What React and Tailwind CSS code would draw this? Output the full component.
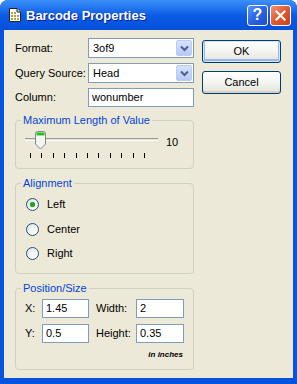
import React from "react";

const F = { fontFamily: '"Liberation Sans", Arial, sans-serif' };

function Combo({ value }) {
  return (
    <div className="h-[20px] w-[106px] border border-[#7F9DB9] bg-white flex items-center justify-between pl-[4px] pr-[1px] text-[11px] text-black">
      <span>{value}</span>
      <div className="w-[16px] h-[16px] rounded-[2px] border border-[#B9CCF5] bg-gradient-to-b from-[#D6E3FD] to-[#B4C9F6] flex items-center justify-center">
        <svg width="9" height="7" viewBox="0 0 9 7">
          <path d="M1 1.5 L4.5 5 L8 1.5" fill="none" stroke="#4D6185" strokeWidth="2" />
        </svg>
      </div>
    </div>
  );
}

function TextBox({ value, w }) {
  return (
    <div className={`h-[19px] ${w} border border-[#7F9DB9] bg-white flex items-center pl-[3px] text-[11px] text-black`}>
      {value}
    </div>
  );
}

function Radio({ label, checked }) {
  return (
    <div className="flex items-center h-[13px] gap-[8px]">
      <div className="w-[13px] h-[13px] rounded-full border border-[#1C5180] bg-gradient-to-br from-[#DCDCD4] via-[#F6F6F4] to-white flex items-center justify-center">
        {checked && <div className="w-[5px] h-[5px] rounded-full bg-[#21A121] shadow-[0_0_1px_#5CC05C]" />}
      </div>
      <span className="text-[11px] text-black">{label}</span>
    </div>
  );
}

function Group({ title, className, children }) {
  return (
    <fieldset className={`border border-[#D0D0BF] rounded-[4px] ${className}`}>
      <legend className="ml-[5px] px-[2px] text-[11px] leading-[13px] text-[#0046D5]">{title}</legend>
      {children}
    </fieldset>
  );
}

function XPButton({ label, def }) {
  return (
    <div
      className={`h-[23px] w-[79px] rounded-[3px] border border-[#003C74] bg-gradient-to-b from-white via-[#F4F4F0] to-[#E3E2DA] flex items-center justify-center text-[11px] text-black ${
        def ? "shadow-[inset_0_0_0_1px_#CEE7FF,inset_0_-1px_0_2px_#98B8EA]" : "shadow-[inset_0_-2px_0_#D6D0C5]"
      }`}
    >
      {label}
    </div>
  );
}

export default function App() {
  const ticks = Array.from({ length: 11 });
  return (
    <div className="w-[297px] h-[384px] bg-white" style={F}>
      <div className="w-[297px] h-[384px] rounded-t-[8px] overflow-hidden flex flex-col bg-[#0553E1]">
        {/* Title bar */}
        <div className="h-[30px] shrink-0 flex items-center bg-gradient-to-b from-[#3D8FF8] via-[#0B5CE6] to-[#0650DA] pl-[9px] pr-[6px]">
          <svg width="12" height="14" viewBox="0 0 12 14" className="shrink-0">
            <path d="M0.5 0.5 H8 L11.5 4 V13.5 H0.5 Z" fill="#FFFFF4" stroke="#222" />
            <path d="M8 0.5 V4 H11.5" fill="#DDD" stroke="#222" />
            <rect x="2" y="4" width="2" height="2" fill="#C8A000" />
            <rect x="5" y="4" width="2" height="2" fill="#999" />
            <rect x="2" y="7" width="2" height="2" fill="#999" />
            <rect x="5" y="7" width="2" height="2" fill="#C8A000" />
            <rect x="8" y="7" width="2" height="2" fill="#999" />
            <rect x="2" y="10" width="2" height="2" fill="#C8A000" />
            <rect x="5" y="10" width="2" height="2" fill="#999" />
            <rect x="8" y="10" width="2" height="2" fill="#C8A000" />
          </svg>
          <span className="ml-[5px] text-[13px] font-bold text-white [text-shadow:1px_1px_0_#0A1E8C] leading-none">
            Barcode Properties
          </span>
          <div className="ml-auto flex gap-[2px]">
            <div className="w-[21px] h-[21px] rounded-[3px] border border-white bg-gradient-to-br from-[#5C95FA] via-[#2A63E4] to-[#1B4FD0] flex items-center justify-center text-white font-bold text-[16px] leading-none">
              ?
            </div>
            <div className="w-[21px] h-[21px] rounded-[3px] border border-white bg-gradient-to-br from-[#F0926E] via-[#E2582F] to-[#C8411A] flex items-center justify-center">
              <svg width="11" height="11" viewBox="0 0 11 11">
                <path d="M1.5 1.5 L9.5 9.5 M9.5 1.5 L1.5 9.5" stroke="white" strokeWidth="2.2" strokeLinecap="square" />
              </svg>
            </div>
          </div>
        </div>

        {/* Client area */}
        <div className="flex-1 mx-[4px] mb-[6px] bg-[#ECE9D8] flex pl-[11px] pt-[8px] gap-[8px]">
          <div className="w-[179px] flex flex-col">
            <div className="flex items-center">
              <span className="w-[73px] text-[11px] text-black">Format:</span>
              <Combo value="3of9" />
            </div>
            <div className="flex items-center mt-[5px]">
              <span className="w-[73px] text-[11px] text-black">Query Source:</span>
              <Combo value="Head" />
            </div>
            <div className="flex items-center mt-[5px]">
              <span className="w-[73px] text-[11px] text-black">Column:</span>
              <TextBox value="wonumber" w="w-[106px]" />
            </div>

            <Group title="Maximum Length of Value" className="mt-[7px] h-[55px]">
              <div className="flex items-start pl-[9px] pt-[4px]">
                <div className="relative w-[133px] h-[30px]">
                  <div className="absolute left-0 right-0 top-[7px] h-[3px] border-t border-[#9D9C99] border-b border-b-white bg-[#E3E1D5]" />
                  <svg width="11" height="19" viewBox="0 0 11 19" className="absolute left-[10px] top-0">
                    <path d="M0.5 2.5 Q0.5 0.5 2.5 0.5 H8.5 Q10.5 0.5 10.5 2.5 V13 L5.5 18 L0.5 13 Z" fill="#F4F4F0" stroke="#7C8C84" />
                    <path d="M1.5 1.5 H9.5 V4 H1.5 Z" fill="#21C021" />
                    <path d="M1.5 4 H9.5 V5 H1.5 Z" fill="#9AE09A" />
                  </svg>
                  <div className="absolute left-[5px] top-[22px] w-[115px] flex justify-between">
                    {ticks.map((_, i) => (
                      <div key={i} className="w-[1px] h-[5px] bg-black" />
                    ))}
                  </div>
                </div>
                <span className="ml-[8px] mt-[3px] text-[11px] text-black">10</span>
              </div>
            </Group>

            <Group title="Alignment" className="mt-[8px] h-[97px]">
              <div className="flex flex-col gap-[11.5px] pl-[10px] pt-[8px]">
                <Radio label="Left" checked />
                <Radio label="Center" />
                <Radio label="Right" />
              </div>
            </Group>

            <Group title="Position/Size" className="mt-[8px] h-[88px]">
              <div className="flex flex-col pt-[4px] pl-[9px]">
                <div className="flex items-center">
                  <span className="w-[17px] text-[11px] text-black">X:</span>
                  <TextBox value="1.45" w="w-[47px]" />
                  <span className="ml-[7px] w-[40px] text-[11px] text-black">Width:</span>
                  <TextBox value="2" w="w-[48px]" />
                </div>
                <div className="flex items-center mt-[6px]">
                  <span className="w-[17px] text-[11px] text-black">Y:</span>
                  <TextBox value="0.5" w="w-[47px]" />
                  <span className="ml-[7px] w-[40px] text-[11px] text-black">Height:</span>
                  <TextBox value="0.35" w="w-[48px]" />
                </div>
                <div className="flex justify-end pr-[10px] mt-[6px]">
                  <span className="text-[8px] italic font-bold text-black">in inches</span>
                </div>
              </div>
            </Group>
          </div>

          <div className="w-[79px] flex flex-col pt-[2px] gap-[8px]">
            <XPButton label="OK" def />
            <XPButton label="Cancel" />
          </div>
        </div>
      </div>
    </div>
  );
}
